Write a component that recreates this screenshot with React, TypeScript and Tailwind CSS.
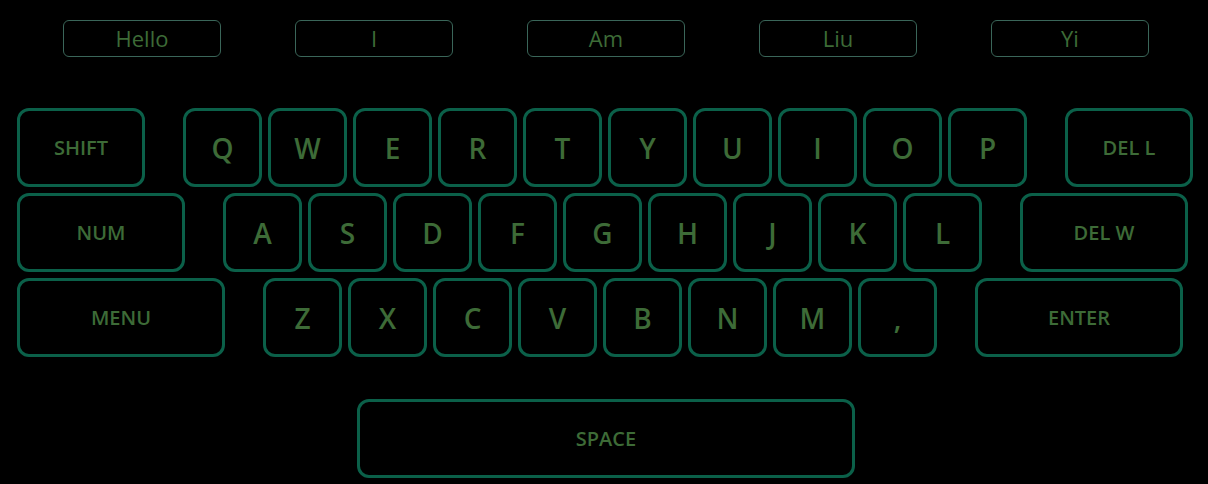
const words = ["Hello", "I", "Am", "Liu", "Yi"];

const rows = [
  { left: "SHIFT", leftW: "w-[128px]", keys: ["Q", "W", "E", "R", "T", "Y", "U", "I", "O", "P"], right: "DEL L", rightW: "w-[128px]" },
  { left: "NUM", leftW: "w-[168px]", keys: ["A", "S", "D", "F", "G", "H", "J", "K", "L"], right: "DEL W", rightW: "w-[168px]" },
  { left: "MENU", leftW: "w-[208px]", keys: ["Z", "X", "C", "V", "B", "N", "M", ","], right: "ENTER", rightW: "w-[208px]" },
];

function WideKey({ label, width }: { label: string; width: string }) {
  return (
    <div
      className={`${width} h-[79px] flex items-center justify-center rounded-[12px] border-[3px] border-[#0b6049] text-[20px] font-semibold text-[#3d6b37]`}
    >
      {label}
    </div>
  );
}

function LetterKey({ label }: { label: string }) {
  return (
    <div className="w-[79px] h-[79px] flex items-center justify-center rounded-[12px] border-[3px] border-[#0b6049] text-[28px] font-semibold text-[#3d6b37]">
      {label}
    </div>
  );
}

export default function App() {
  return (
    <div
      className="w-[1208px] h-[484px] bg-black overflow-hidden"
      style={{ fontFamily: '"Open Sans", "Noto Sans", sans-serif' }}
    >
      {/* Word suggestions */}
      <div className="flex gap-[74px] pl-[63px] pt-[20px]">
        {words.map((w) => (
          <div
            key={w}
            className="w-[158px] h-[37px] flex items-center justify-center rounded-[6px] border-[1.5px] border-[#3a6659] text-[22px] font-normal text-[#3d6b37]"
          >
            {w}
          </div>
        ))}
      </div>

      {/* Keyboard rows */}
      <div className="flex flex-col gap-[6px] pl-[17px] pt-[51px]">
        {rows.map((row) => (
          <div key={row.left} className="flex items-center gap-[38px]">
            <WideKey label={row.left} width={row.leftW} />
            <div className="flex gap-[6px]">
              {row.keys.map((k) => (
                <LetterKey key={k} label={k} />
              ))}
            </div>
            <WideKey label={row.right} width={row.rightW} />
          </div>
        ))}
      </div>

      {/* Space bar */}
      <div className="pl-[357px] pt-[42px]">
        <WideKey label="SPACE" width="w-[498px]" />
      </div>
    </div>
  );
}
